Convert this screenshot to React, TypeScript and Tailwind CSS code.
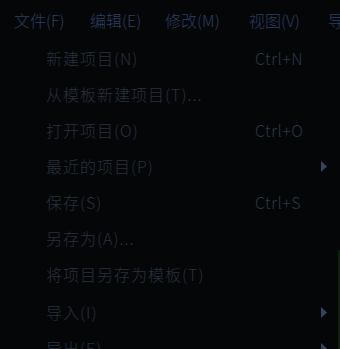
import React from "react";

type Item = { label: string; shortcut?: string; sub?: boolean; gapBefore?: boolean };

const items: Item[] = [
  { label: "新建项目(N)", shortcut: "Ctrl+N" },
  { label: "从模板新建项目(T)..." },
  { label: "打开项目(O)", shortcut: "Ctrl+O" },
  { label: "最近的项目(P)", sub: true },
  { label: "保存(S)", shortcut: "Ctrl+S" },
  { label: "另存为(A)..." },
  { label: "将项目另存为模板(T)" },
  { label: "导入(I)", sub: true, gapBefore: true },
  { label: "导出(E)", sub: true },
];

const menus = [
  { label: "文件(F)", w: "w-[76px]" },
  { label: "编辑(E)", w: "w-[75px]" },
  { label: "修改(M)", w: "w-[84px]" },
  { label: "视图(V)", w: "w-[79px]" },
  { label: "导", w: "w-[20px]" },
];

export default function App() {
  return (
    <div
      className="relative w-[340px] h-[349px] overflow-hidden bg-[#050608] font-light"
      style={{ fontFamily: '"Noto Sans CJK SC", "Noto Sans", sans-serif' }}
    >
      <div className="flex h-10 items-center pl-[14px] text-[16px] text-[#2b3f60] whitespace-nowrap">
        {menus.map((m) => (
          <div key={m.label} className={`${m.w} shrink-0`}>
            {m.label}
          </div>
        ))}
      </div>
      <div className="flex flex-col">
        {items.map((it) => (
          <div
            key={it.label}
            className={`flex h-9 items-center pl-[46px] pr-[13px] text-[16px] tracking-[1px] text-[#28313d] whitespace-nowrap ${
              it.gapBefore ? "mt-[2px]" : ""
            }`}
          >
            <span className="flex-1">{it.label}</span>
            {it.shortcut && (
              <span className="w-[72px] text-[16px] tracking-[0.5px] text-[#2b3746]">{it.shortcut}</span>
            )}
            {it.sub && (
              <svg width="6" height="11" viewBox="0 0 6 11">
                <path d="M0 0 L6 5.5 L0 11 Z" fill="#34445a" />
              </svg>
            )}
          </div>
        ))}
      </div>
      <div className="absolute right-0 top-[250px] bottom-0 w-[2px] bg-[#0b200e]" />
    </div>
  );
}
